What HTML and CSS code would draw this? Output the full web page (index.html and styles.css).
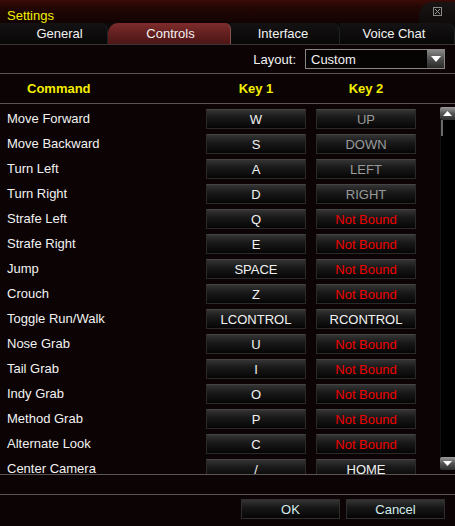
FILE: index.html
```html
<!DOCTYPE html>
<html>
<head>
<meta charset="utf-8">
<link rel="stylesheet" href="styles.css">
</head>
<body>
<div class="win">
  <div class="titlebar">
    <span class="title">Settings</span>
    <div class="closecap"><span class="close">
      <svg width="9" height="9" viewBox="0 0 9 9"><rect x="0.5" y="0.5" width="8" height="8" fill="none" stroke="#8a8a8a"/><path d="M2 2L7 7M7 2L2 7" stroke="#9a9a9a" stroke-width="1"/></svg>
    </span></div>
  </div>
  <div class="tabs">
    <div class="tab t1">General</div>
    <div class="tab active">Controls</div>
    <div class="tab t3">Interface</div>
    <div class="tab t4">Voice Chat</div>
  </div>
  <div class="layoutrow">
    <span class="lbl">Layout:</span>
    <div class="select"><span>Custom</span><span class="sbtn"><svg width="10" height="6" viewBox="0 0 10 6"><path d="M0 0H10L5 6Z" fill="#fff"/></svg></span></div>
  </div>
  <div class="header">
    <span class="hcmd">Command</span>
    <span class="hkey">Key 1</span>
    <span class="hkey">Key 2</span>
  </div>
  <div class="listwrap">
    <div class="list">
      <div class="row"><span class="cmd">Move Forward</span><span class="key">W</span><span class="key dim">UP</span></div>
      <div class="row"><span class="cmd">Move Backward</span><span class="key">S</span><span class="key dim">DOWN</span></div>
      <div class="row"><span class="cmd">Turn Left</span><span class="key">A</span><span class="key dim">LEFT</span></div>
      <div class="row"><span class="cmd">Turn Right</span><span class="key">D</span><span class="key dim">RIGHT</span></div>
      <div class="row"><span class="cmd">Strafe Left</span><span class="key">Q</span><span class="key nb">Not Bound</span></div>
      <div class="row"><span class="cmd">Strafe Right</span><span class="key">E</span><span class="key nb">Not Bound</span></div>
      <div class="row"><span class="cmd">Jump</span><span class="key">SPACE</span><span class="key nb">Not Bound</span></div>
      <div class="row"><span class="cmd">Crouch</span><span class="key">Z</span><span class="key nb">Not Bound</span></div>
      <div class="row"><span class="cmd">Toggle Run/Walk</span><span class="key">LCONTROL</span><span class="key">RCONTROL</span></div>
      <div class="row"><span class="cmd">Nose Grab</span><span class="key">U</span><span class="key nb">Not Bound</span></div>
      <div class="row"><span class="cmd">Tail Grab</span><span class="key">I</span><span class="key nb">Not Bound</span></div>
      <div class="row"><span class="cmd">Indy Grab</span><span class="key">O</span><span class="key nb">Not Bound</span></div>
      <div class="row"><span class="cmd">Method Grab</span><span class="key">P</span><span class="key nb">Not Bound</span></div>
      <div class="row"><span class="cmd">Alternate Look</span><span class="key">C</span><span class="key nb">Not Bound</span></div>
      <div class="row"><span class="cmd">Center Camera</span><span class="key">/</span><span class="key">HOME</span></div>
    </div>
    <div class="scrollbar">
      <span class="sarrow"><svg width="9" height="5" viewBox="0 0 9 5"><path d="M0 5H9L4.5 0Z" fill="#fff"/></svg></span>
      <div class="track"><span class="thumb"></span></div>
      <span class="sarrow"><svg width="9" height="5" viewBox="0 0 9 5"><path d="M0 0H9L4.5 5Z" fill="#fff"/></svg></span>
    </div>
  </div>
  <div class="spacer"></div>
  <div class="footer">
    <span class="btn">OK</span>
    <span class="btn">Cancel</span>
  </div>
</div>
</body>
</html>
```
FILE: styles.css
```css
* { box-sizing: border-box; }
html, body { margin: 0; padding: 0; background: #0b0304; }
body { width: 455px; height: 526px; overflow: hidden; font-family: "Liberation Sans", Arial, sans-serif; font-size: 13px; color: #f2f2f2; }
.win { width: 455px; height: 526px; display: flex; flex-direction: column; background: #0b0304; }

.titlebar { height: 23px; display: flex; align-items: flex-end; justify-content: space-between; background: linear-gradient(#3a0c07 0px, #220604 8px, #120303 23px); }
.title { color: #f4ee00; font-size: 13px; padding: 0 0 0 7px; line-height: 15px; }
.closecap { width: 36px; height: 21px; background: linear-gradient(#1a1414, #0f0b0b); border-radius: 14px 0 0 0; display: flex; justify-content: center; padding-top: 5px; }
.close { display: block; width: 9px; height: 9px; }
.close svg { display: block; }

.tabs { height: 22px; display: grid; grid-template-columns: 108px 123px 109px 115px; background: #0c0a0a; border-bottom: 1px solid #3a3434; }
.tab { display: flex; align-items: center; justify-content: center; color: #f2f2f2; font-size: 13px; background: linear-gradient(#141212, #080707); border-right: 1px solid #222; border-radius: 0 8px 0 0; }
.tab.t1 { padding-left: 12px; }
.tab.t3 { padding-right: 4px; }
.tab.t4 { padding-right: 6px; }
.tab.active { background: linear-gradient(#7d2c2c, #5f1d1d 60%, #4e1616); border-radius: 10px 6px 0 0; border-right: 1px solid #8a5050; padding-left: 3px; }

.layoutrow { height: 29px; display: flex; align-items: center; justify-content: flex-end; padding-right: 10px; border-bottom: 1px solid #5a5454; }
.lbl { margin-right: 9px; font-size: 13px; color: #f2f2f2; }
.select { width: 140px; height: 20px; border: 1px solid #8a8484; background: #060303; display: flex; align-items: center; justify-content: space-between; padding-left: 5px; font-size: 13px; }
.sbtn { width: 17px; height: 18px; background: linear-gradient(#8a8a8a, #4a4a4a 55%, #2a2a2a); display: flex; align-items: center; justify-content: center; }
.sbtn svg { display: block; }

.header { height: 30px; display: grid; grid-template-columns: 196px 100px 100px; column-gap: 10px; align-items: center; border-bottom: 1px solid #5a5454; color: #f4ee00; font-weight: bold; font-size: 13px; }
.hcmd { padding-left: 27px; }
.hkey { text-align: center; }

.listwrap { height: 371px; display: flex; border-bottom: 1px solid #5a5454; overflow: hidden; }
.list { flex: 1; padding-top: 5px; overflow: hidden; }
.row { height: 25px; display: grid; grid-template-columns: 196px 100px 100px; column-gap: 10px; }
.cmd { padding-left: 7px; line-height: 19px; color: #f2f2f2; }
.key { height: 20px; line-height: 19px; text-align: center; background: linear-gradient(#343434, #1a1a1a 40%, #050505); border: 1px solid #2a2a2a; border-top-color: #444; color: #f2f2f2; font-size: 13px; }
.key.dim { color: #9a9a9a; }
.key.nb { color: #f00000; }

.scrollbar { width: 15px; display: flex; flex-direction: column; padding: 3px 0 4px; background: #0b0304; }
.sarrow { height: 13px; display: flex; align-items: center; justify-content: center; background: linear-gradient(#9a9a9a, #555 50%, #2e2e2e); border-radius: 2px 0 0 2px; }
.sarrow svg { display: block; }
.track { flex: 1; background: #000; border-left: 1px solid #111; position: relative; }
.thumb { position: absolute; left: 0; top: 0; width: 2px; height: 16px; background: #6a6a6a; }

.spacer { height: 20px; border-bottom: 1px solid #5a5454; }
.footer { flex: 1; display: flex; justify-content: flex-end; gap: 6px; padding: 4px 10px 0 0; }
.btn { width: 99px; height: 20px; line-height: 19px; text-align: center; color: #d2ecec; background: linear-gradient(#353535, #181818 40%, #050505); border: 1px solid #2e2e2e; font-size: 13px; }
```
